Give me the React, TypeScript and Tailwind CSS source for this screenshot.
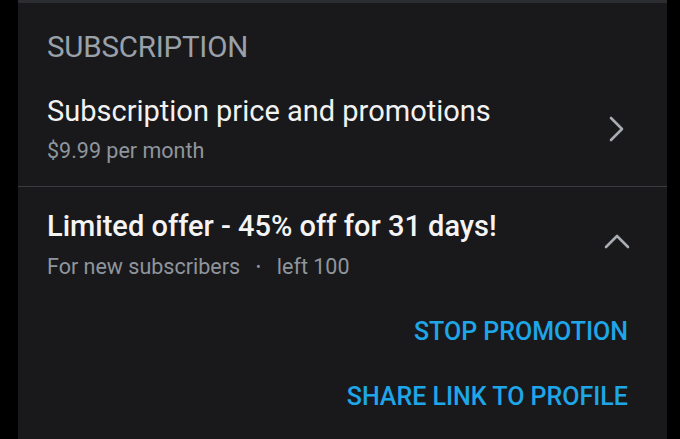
import React from "react";

export default function App() {
  return (
    <div className="w-[680px] h-[439px] bg-black overflow-hidden" style={{ fontFamily: "Roboto, 'Noto Sans', sans-serif" }}>
      <div className="mx-[18px] w-[649px] h-[439px] bg-[#19191b] flex flex-col border-t-[3px] border-[#2b2d31]">
        <div className="pl-[29px] pt-[28px] text-[29.5px] leading-[32px] text-[#9aa1aa] tracking-[-0.2px]">SUBSCRIPTION</div>
        <div className="flex items-center pl-[29px] pr-[40px] pt-[30px] pb-[21px] border-b border-[#3a3b3f]">
          <div className="flex-1 flex flex-col">
            <div className="text-[29px] leading-[36px] text-[#f2f2f2]">Subscription price and promotions</div>
            <div className="text-[21.5px] leading-[28px] text-[#8f959d] mt-[8px]">$9.99 per month</div>
          </div>
          <svg width="18" height="28" viewBox="0 0 18 28" className="mr-[1px]">
            <path d="M3 3 L14 14 L3 25" fill="none" stroke="#a9adb3" strokeWidth="2.6" strokeLinecap="round" strokeLinejoin="round" />
          </svg>
        </div>
        <div className="flex items-center pl-[29px] pr-[36px] pt-[21px]">
          <div className="flex-1 flex flex-col">
            <div className="text-[29px] leading-[36px] font-medium text-[#f4f4f4]">Limited offer - 45% off for 31 days!</div>
            <div className="text-[21.5px] leading-[28px] text-[#8f959d] mt-[9px] flex items-center">
              <span>For new subscribers</span>
              <span className="mx-[16px] text-[14px]">•</span>
              <span>left 100</span>
            </div>
          </div>
          <svg width="28" height="18" viewBox="0 0 28 18" className="mb-[7px]">
            <path d="M3 15 L14 4 L25 15" fill="none" stroke="#a9adb3" strokeWidth="2.6" strokeLinecap="round" strokeLinejoin="round" />
          </svg>
        </div>
        <div className="flex flex-col items-end pr-[39px] pt-[37px] gap-[37px] text-[25px] leading-[28px] font-medium text-[#1ea6e8]">
          <div>STOP PROMOTION</div>
          <div>SHARE LINK TO PROFILE</div>
        </div>
      </div>
    </div>
  );
}
